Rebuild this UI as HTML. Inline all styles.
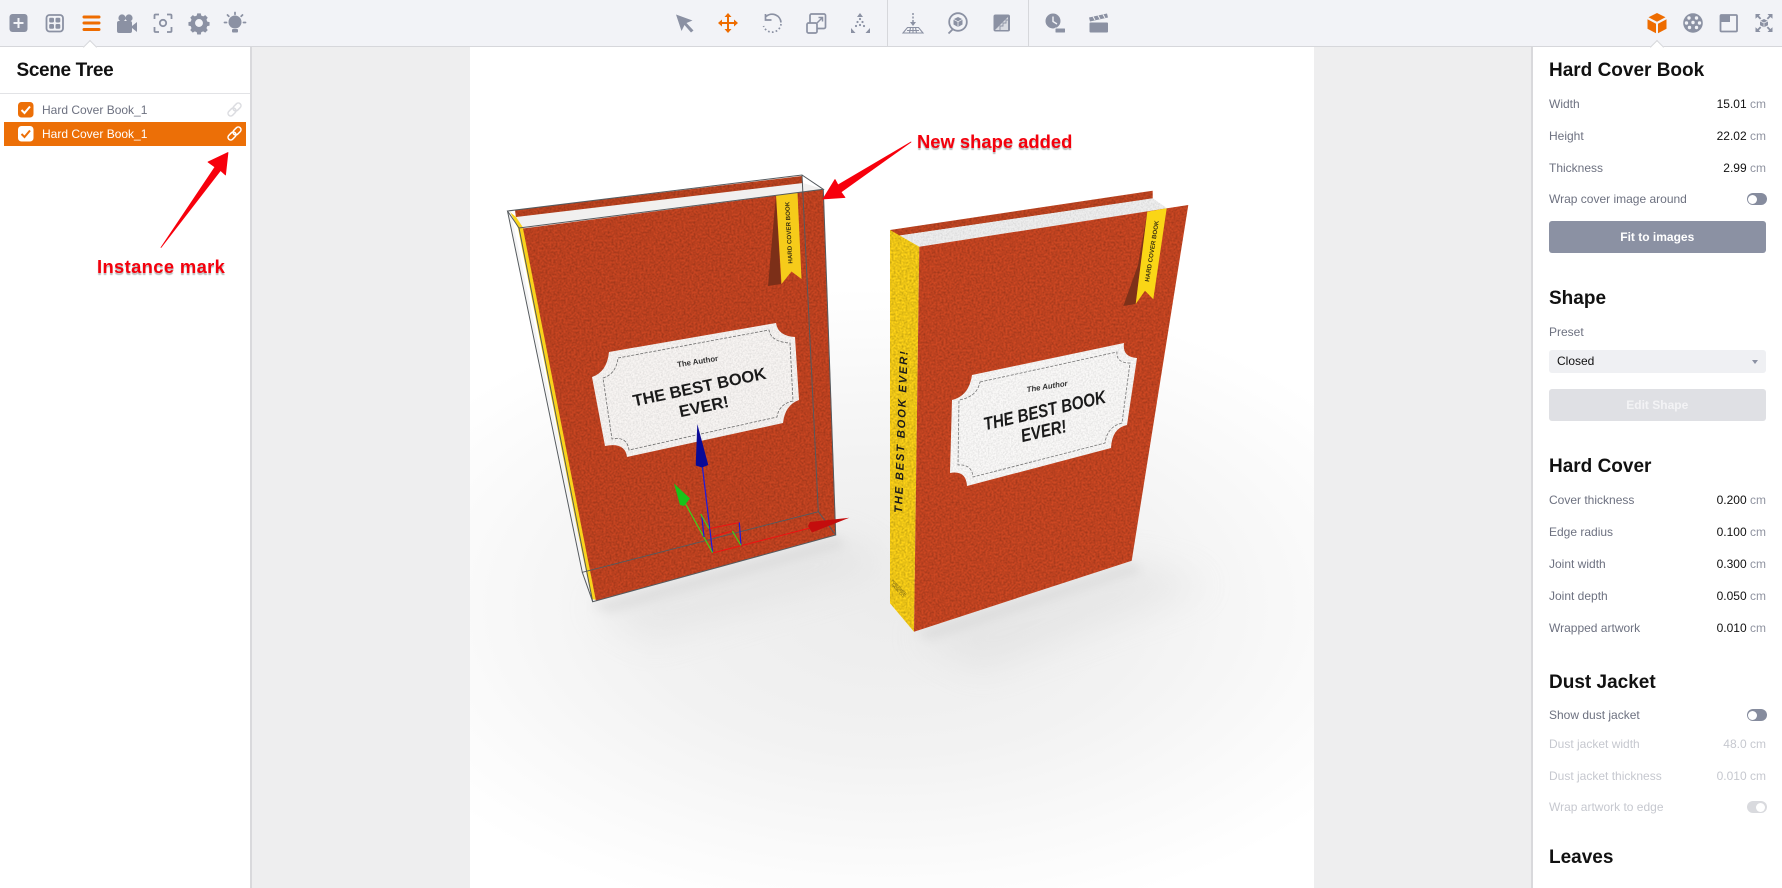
<!DOCTYPE html>
<html lang="en"><head><meta charset="utf-8"><title>Hard Cover Book</title>
<style>
*{box-sizing:border-box}
html,body{margin:0;padding:0;width:1782px;height:888px;overflow:hidden;background:#eeeeef;font-family:"Liberation Sans",sans-serif}
#root{position:relative;width:1782px;height:888px;overflow:hidden;background:#eeeeef}
.abs,.l,.v,.h{position:absolute}
svg{position:absolute;left:0;top:0}
#bar{position:absolute;left:0;top:0;width:1782px;height:47px;background:#f2f3f7;border-bottom:1px solid #d6d7db}
#lp{position:absolute;left:0;top:47px;width:252px;height:841px;background:#fff;border-right:2px solid #d9d9dc}
#rp{position:absolute;left:1530.5px;top:47px;width:251.5px;height:841px;background:#fff;border-left:2px solid #d9d9dc}
#vp{position:absolute;left:470px;top:47px;width:844px;height:841px;background:radial-gradient(ellipse 560px 320px at 420px 560px,#ececec 0,#f2f2f2 45%,#fafafa 78%,#fff 100%)}
.notch{position:absolute;width:10px;height:10px;background:#fff;border-left:1px solid #d6d7db;border-top:1px solid #d6d7db;transform:rotate(45deg);top:42px}
.h{font-weight:bold;font-size:19px;color:#111;line-height:22px;left:1549px}
.l{left:1549px;font-size:12px;line-height:16px;color:#6d7180;white-space:nowrap}
.v{right:16px;font-size:12px;line-height:16px;color:#111;white-space:nowrap}
.v i{font-style:normal;color:#8f93a0}
.dis,.dis i{color:#c6c8cf}
.tg{position:absolute;left:1746.5px;width:20px;height:12px;border-radius:6px;background:#868c9e}
.tg:before{content:"";position:absolute;left:1.5px;top:1.5px;width:9px;height:9px;border-radius:50%;background:#fff}
.tg.off{background:#d9dade}
.tg.off:before{left:9.5px}
.btn{position:absolute;left:1548.5px;width:217.5px;height:32px;border-radius:3px;color:#fff;font-weight:bold;font-size:12px;line-height:32px;text-align:center}
.row{position:absolute;font-size:12px;line-height:16px;left:42px;white-space:nowrap}
.ann{position:absolute;color:#f4000c;font-weight:bold;font-size:18.4px;line-height:20px;text-shadow:0 2px 1px rgba(0,0,0,.28);white-space:nowrap}
</style></head><body>
<div id="root">
<div id="vp"></div>

<svg width="1782" height="888" viewBox="0 0 1782 888">
<defs>
<filter id="nz" x="0" y="0" width="100%" height="100%" color-interpolation-filters="sRGB">
<feTurbulence type="fractalNoise" baseFrequency=".5" numOctaves="2" seed="4" result="t"/>
<feColorMatrix in="t" type="matrix" values="0 0 0 0 0  0 0 0 0 0  0 0 0 0 0  .42 0 0 0 -.13" result="a"/>
<feComposite in="a" in2="SourceAlpha" operator="in" result="b"/>
<feMerge><feMergeNode in="SourceGraphic"/><feMergeNode in="b"/></feMerge>
</filter>
<filter id="nl" x="0" y="0" width="100%" height="100%" color-interpolation-filters="sRGB">
<feTurbulence type="fractalNoise" baseFrequency=".6" numOctaves="2" seed="9" result="t"/>
<feColorMatrix in="t" type="matrix" values="0 0 0 0 .5  0 0 0 0 .5  0 0 0 0 .5  .4 0 0 0 -.14" result="a"/>
<feComposite in="a" in2="SourceAlpha" operator="in" result="b"/>
<feMerge><feMergeNode in="SourceGraphic"/><feMergeNode in="b"/></feMerge>
</filter>
<filter id="bl" x="-60%" y="-60%" width="220%" height="220%"><feGaussianBlur stdDeviation="18"/></filter>
<filter id="bl2" x="-30%" y="-100%" width="160%" height="300%"><feGaussianBlur stdDeviation="5"/></filter>
<clipPath id="vc"><rect x="470" y="47" width="844" height="841"/></clipPath>
</defs>

<!-- floor shadows -->
<g clip-path="url(#vc)">
<polygon points="592,605 840,535 890,565 650,640" fill="#cfcfcf" opacity=".3" filter="url(#bl)"/>
<polygon points="914,635 1135,562 1210,585 980,670" fill="#cfcfcf" opacity=".3" filter="url(#bl)"/>
<polygon points="590,605 838,537 846,546 610,613" fill="#c4c4c4" opacity=".32" filter="url(#bl2)"/>
<polygon points="914,633 1133,562 1142,571 930,640" fill="#c4c4c4" opacity=".32" filter="url(#bl2)"/>
</g>

<!-- BOOK 1 -->
<polygon points="515,210 802,176 803,184 516,218" fill="#c24520" filter="url(#nz)"/>
<polygon points="516,217 803,183 823,189 519,229" fill="#f1f0ef"/>
<polygon points="510,212 516,217 524,229 597,600 591,599 518,228" fill="#f9d41c"/>
<polygon points="508,212 511,213 592,600 590,600" fill="#f4f4f4"/>
<polygon points="523,228.500 823.500,189.500 836,535 596,601" fill="#ca4622" filter="url(#nz)"/>
<polygon points="776,195 781,284 768,286 772,240" fill="#7c2f18"/>
<polygon points="776,195 797.500,192.500 801.500,279 791.500,271.500 781.500,284" fill="#f6cb1a"/>
<text transform="translate(792.500,263.500) rotate(-93)" font-size="6.200" font-weight="bold" font-family="Liberation Sans" fill="#3c3210">HARD COVER BOOK</text>
<path d="M609,352 L776,323 Q778,336 795,337 L799,400 Q785,405 783,423 L627,457 Q625,442 605,446 L592,377 Q607,372 609,352 Z" fill="#f8f5f3" filter="url(#nl)"/>
<path d="M618,358 L769,330 Q771,342 790,343 L793,401 Q779,404 777,417 L629,450 Q627,436 612,439 L603,378 Q616,374 618,358Z" fill="none" stroke="#6c6c6c" stroke-width=".8" stroke-dasharray="3 1.500"/>
<g font-family="Liberation Sans" font-weight="bold" fill="#1a1a1a" text-anchor="middle">
<text transform="translate(698,364) rotate(-9)" font-size="7.800" fill="#333">The Author</text>
<text transform="translate(700.500,392.500) rotate(-11.900)" font-size="16.500">THE BEST BOOK</text>
<text transform="translate(705,412) rotate(-11.900)" font-size="16.500">EVER!</text>
</g>
<!-- wireframe -->
<g fill="none" stroke="#555a5e" stroke-width="1">
<path d="M507.500,211 L802,175 L823.300,189.300 L519,228 Z"/>
<path d="M519,228 L592.700,601.700 L835.700,535 L823.300,189.300"/>
<path d="M507.500,211 L582.300,572.300 L818.300,511.700 L802,175"/>
<path d="M582.300,572.300 L592.700,601.700 M818.300,511.700 L835.700,535"/>
</g>
<!-- gizmo -->
<g fill="none" stroke-width="1">
<path d="M712.700,553 L702.300,466" stroke="#1b1be0" stroke-width="1.200"/>
<path d="M712.700,553 L685,503" stroke="#3ad41a" stroke-width="1.200"/>
<path d="M712.700,553 L810,528" stroke="#ef1111"/>
<path d="M710,528.500 L739.300,522.500 M712,537 L732,531" stroke="#ef1111"/>
<path d="M739.300,522.500 L741,545.500 M701.700,515 L704,537" stroke="#1b1be0" stroke-width="1.200"/>
<path d="M700.700,514 L709,528.500 M732.300,531 L741,545.500" stroke="#3ad41a" stroke-width="1.200"/>
</g>
<polygon points="697.300,424 708.300,465 702,467.500 695.700,465.500" fill="#0a0a96"/>
<polygon points="674,483.500 690,498.500 684,506 680,505" fill="#17c41a"/>
<polygon points="849.300,517.700 812,532.500 808,526 810,522" fill="#c40d0d"/>

<!-- BOOK 2 -->
<polygon points="890,230 1152.700,190.700 1152.700,198.500 896,236" fill="#c64722" filter="url(#nz)"/>
<polygon points="897,236 1152.700,198.300 1167,208.300 919.300,246.700" fill="#efefef" filter="url(#nl)"/>
<polygon points="890,230 919.300,246.700 914,631.700 890,603.300" fill="#ffd418" filter="url(#nz)"/>
<polygon points="919.300,246.700 1188.300,205 1131.700,560.700 914,631.700" fill="#ce4823" filter="url(#nz)"/>
<polygon points="1147.300,211.700 1135.700,304 1123.300,306 1138,265" fill="#7e3119"/>
<polygon points="1147.300,211.700 1166.700,208.300 1153.300,299.300 1145,290.700 1135.700,304" fill="#fad616"/>
<text transform="translate(1149,282) rotate(-80.800)" font-size="6.200" font-weight="bold" font-family="Liberation Sans" fill="#3c3210">HARD COVER BOOK</text>
<path d="M972,375 L1124,343 Q1122,357 1137,358 L1127,425 Q1112,428 1111,448 L967,486 Q966,470 950,473 L952,400 Q969,396 972,375Z" fill="#faf9f8" filter="url(#nl)"/>
<path d="M980,382 L1117,352 Q1116,363 1130,363 L1122,423 Q1107,427 1105,443 L973,477 Q972,464 958,465 L959,400 Q977,397 980,382Z" fill="none" stroke="#777" stroke-width=".8" stroke-dasharray="3 1.500"/>
<g font-family="Liberation Sans" font-weight="bold" fill="#1a1a1a" text-anchor="middle" font-style="italic">
<text transform="translate(1047.500,389) rotate(-9)" font-size="7.800" fill="#333">The Author</text>
<text transform="translate(1046,416.500) rotate(-12.900) scale(1,1.2)" font-size="15.200">THE BEST BOOK</text>
<text transform="translate(1045,437) rotate(-12.900) scale(1,1.2)" font-size="15.200">EVER!</text>
<text transform="translate(902,513) rotate(-88)" font-size="11.200" letter-spacing="1.800" text-anchor="start">THE BEST BOOK EVER!</text>
</g>
<g fill="#6a5a18" font-family="Liberation Sans" font-size="3.600">
<text transform="translate(891,581) rotate(46)">PUBLISHER</text>
<text transform="translate(891,585) rotate(46)">NAME CO.</text>
</g>
</svg>

<div id="bar"></div>
<div style="position:absolute;left:887px;top:0;width:1px;height:46px;background:#d6d7db"></div>
<div style="position:absolute;left:1028px;top:0;width:1px;height:46px;background:#d6d7db"></div>

<div id="lp"></div>
<div id="rp"></div>
<div class="notch" style="left:85px"></div>
<div class="notch" style="left:1652px"></div>

<!-- left panel -->
<div class="abs" style="left:16.500px;top:60px;font-size:19px;font-weight:bold;color:#111;line-height:22px;letter-spacing:-.35px">Scene Tree</div>
<div class="abs" style="left:0;top:93px;width:250px;height:1px;background:#e2e3e6"></div>
<div class="abs" style="left:4px;top:122px;width:242px;height:24px;background:#ec6f07"></div>
<div class="row" style="top:102px;color:#6d7180">Hard Cover Book_1</div>
<div class="row" style="top:126px;color:#fff">Hard Cover Book_1</div>

<!-- right panel -->
<div class="h" style="top:60px">Hard Cover Book</div>
<div class="l" style="top:96px">Width</div><div class="v" style="top:96px">15.01 <i>cm</i></div>
<div class="l" style="top:128px">Height</div><div class="v" style="top:128px">22.02 <i>cm</i></div>
<div class="l" style="top:160px">Thickness</div><div class="v" style="top:160px">2.99 <i>cm</i></div>
<div class="l" style="top:191px">Wrap cover image around</div><div class="tg" style="top:193px"></div>
<div class="btn" style="top:221px;background:#8b91a3">Fit to images</div>

<div class="h" style="top:288px">Shape</div>
<div class="l" style="top:324px">Preset</div>
<div class="abs" style="left:1548.500px;top:350px;width:217.500px;height:23px;border-radius:3px;background:#eff0f3;font-size:12px;line-height:23px;color:#111;padding-left:8.500px">Closed</div>
<div class="abs" style="left:1752px;top:360px;width:0;height:0;border-left:3px solid transparent;border-right:3px solid transparent;border-top:4px solid #8b91a3"></div>
<div class="btn" style="top:389px;background:#dfe0e4;color:#f3f3f5">Edit Shape</div>

<div class="h" style="top:456px">Hard Cover</div>
<div class="l" style="top:492px">Cover thickness</div><div class="v" style="top:492px">0.200 <i>cm</i></div>
<div class="l" style="top:524px">Edge radius</div><div class="v" style="top:524px">0.100 <i>cm</i></div>
<div class="l" style="top:556px">Joint width</div><div class="v" style="top:556px">0.300 <i>cm</i></div>
<div class="l" style="top:588px">Joint depth</div><div class="v" style="top:588px">0.050 <i>cm</i></div>
<div class="l" style="top:620px">Wrapped artwork</div><div class="v" style="top:620px">0.010 <i>cm</i></div>

<div class="h" style="top:672px">Dust Jacket</div>
<div class="l" style="top:707px">Show dust jacket</div><div class="tg" style="top:709px"></div>
<div class="l dis" style="top:736px">Dust jacket width</div><div class="v dis" style="top:736px">48.0 <i>cm</i></div>
<div class="l dis" style="top:768px">Dust jacket thickness</div><div class="v dis" style="top:768px">0.010 <i>cm</i></div>
<div class="l dis" style="top:799px">Wrap artwork to edge</div>
<div class="tg off" style="top:801px"></div>
<div class="h" style="top:847px">Leaves</div>
<div class="l dis" style="top:885px">Signature count</div><div class="v dis" style="top:885px">0.010 <i>cm</i></div>

<div class="ann" style="left:97px;top:257px;letter-spacing:.35px">Instance mark</div>
<div class="ann" style="left:917px;top:132px">New shape added</div>

<!-- icons + arrows overlay -->
<svg width="1782" height="888" viewBox="0 0 1782 888" fill="none">
<g fill="#8b91a3" stroke="none">
<!-- plus square -->
<rect x="9.500" y="14" width="18" height="18" rx="3"/>
<path d="M17.500 18h2v4h4v2h-4v4h-2v-4h-4v-2h4z" fill="#f2f3f7"/>
<!-- camera -->
<circle cx="122" cy="18" r="3.600"/><circle cx="129" cy="18" r="3.600"/>
<path d="M117 23a2 2 0 0 1 2-2h11a2 2 0 0 1 2 2v8a2 2 0 0 1-2 2h-11a2 2 0 0 1-2-2z"/>
<path d="M132 26l5-4v10l-5-4z"/>
<!-- gear -->
<g transform="translate(199 23) scale(.88) translate(-199 -23)"><path fill-rule="evenodd" d="M197 12h4l.6 2.600 2.200.9 2.300-1.400 2.800 2.800-1.400 2.300.9 2.200 2.600.6v4l-2.600.6-.9 2.200 1.400 2.300-2.800 2.800-2.300-1.400-2.200.9-.6 2.600h-4l-.6-2.600-2.200-.9-2.300 1.400-2.800-2.800 1.400-2.300-.9-2.200-2.600-.6v-4l2.600-.6.9-2.200-1.400-2.300 2.800-2.800 2.300 1.400 2.200-.9zM199 18.500a4.500 4.500 0 1 0 0 9 4.500 4.500 0 0 0 0-9z"/></g>
<!-- sun -->
<circle cx="235" cy="22" r="6.500"/>
<rect x="232" y="29" width="6" height="3.500" rx="1"/>
</g>
<g stroke="#8b91a3" stroke-width="1.800">
<!-- grid -->
<rect x="46.500" y="15" width="16.500" height="16.500" rx="3"/>
<g fill="#8b91a3" stroke="none"><rect x="49.200" y="17.700" width="4.800" height="4.800" rx="1.200"/><rect x="55.500" y="17.700" width="4.800" height="4.800" rx="1.200"/><rect x="49.200" y="24" width="4.800" height="4.800" rx="1.200"/><rect x="55.500" y="24" width="4.800" height="4.800" rx="1.200"/></g>
<!-- focus -->
<path d="M154.500 19v-3.500a1 1 0 0 1 1-1H159M167 14.500h3.500a1 1 0 0 1 1 1V19M171.500 27v4a1 1 0 0 1-1 1H167M159 32h-3.500a1 1 0 0 1-1-1v-4"/>
<circle cx="163" cy="23" r="3.200"/>
<!-- sun rays -->
<path d="M235 12.500v1.800M224.500 22.500h2M243.500 22.500h2M227.500 15l1.300 1.300M242.500 15l-1.300 1.300" stroke-linecap="round"/>
</g>
<!-- hamburger -->
<path d="M84 17h15M84 23h15M84 29.500h15" stroke="#ee6c00" stroke-width="3" stroke-linecap="round"/>

<!-- cursor -->
<path d="M676 14.500l16.500 6-6 2.500 7 7.500-2.500 2-6.500-7.500-3 6z" fill="#8b91a3"/>
<!-- move -->
<g fill="#ee6c00"><path d="M728 13l3.500 4h-7zM728 33l3.500-4h-7zM718 23l4-3.500v7zM738 23l-4-3.500v7z"/></g>
<path d="M728 16v14M721 23h14" stroke="#ee6c00" stroke-width="2"/>
<!-- rotate -->
<path d="M766 16.500a9 9 0 0 1 15 6" stroke="#8b91a3" stroke-width="1.700"/>
<path d="M781 24a9 9 0 0 1-17.500 2" stroke="#8b91a3" stroke-width="1.700" stroke-dasharray="1.700 2.200"/>
<path d="M765.500 14v6h6" stroke="#8b91a3" stroke-width="1.700"/>
<!-- scale -->
<rect x="810" y="14" width="15.500" height="14.500" rx="1.500" stroke="#8b91a3" stroke-width="1.700"/>
<rect x="807" y="23" width="10" height="10" rx="1.500" fill="#f2f3f7" stroke="#8b91a3" stroke-width="1.700"/>
<path d="M817 23l5-5M818.500 17.500h4v4" stroke="#8b91a3" stroke-width="1.500"/>
<!-- explode -->
<g fill="#8b91a3"><path d="M860 13l3 4h-6z"/><circle cx="860" cy="19" r="1.100"/><circle cx="857.500" cy="22" r="1.100"/><circle cx="862.500" cy="22" r="1.100"/><circle cx="860" cy="25" r="1.100"/><circle cx="856" cy="26" r="1.100"/><circle cx="864" cy="26" r="1.100"/>
<path d="M851 33v-5l4.500 5zM870 33v-5l-4.500 5z"/></g>
<!-- floor -->
<path d="M913 13v10" stroke="#8b91a3" stroke-width="1.500" stroke-dasharray="2 1.500"/>
<path d="M910 22l3 4 3-4z" fill="#8b91a3"/>
<path d="M907.500 27.500h11l4.500 5.500h-20zM907 30.500h12M910.500 27.500l-1 5.500M915.500 27.500l1 5.500M913 27.500v5.500" stroke="#8b91a3" stroke-width="1.100"/>
<!-- material ball -->
<circle cx="958" cy="22" r="8.800" stroke="#8b91a3" stroke-width="1.800"/>
<path d="M953 29l-4.500 4.500" stroke="#8b91a3" stroke-width="1.800"/>
<path d="M958 17l4.500 2.300v5.200l-4.500 2.500-4.500-2.500v-5.200z" fill="#8b91a3"/>
<path d="M953.500 19.300l4.500 2.400 4.500-2.400M958 21.700v5" stroke="#f2f3f7" stroke-width=".8"/>
<!-- texture -->
<rect x="993.500" y="14.500" width="16.500" height="17" rx="2" fill="#8b91a3"/>
<path d="M995 30l13-13v13z" fill="#d9dbe2"/>
<path d="M1000 30v-4h3v-3h3v-3h3" stroke="#8b91a3" stroke-width=".9"/>
<!-- clock -->
<circle cx="1053" cy="21" r="7.500" fill="#8b91a3"/>
<path d="M1053 16.500v5l4 2.500" stroke="#f2f3f7" stroke-width="1.400"/>
<rect x="1055" y="28" width="10.500" height="5" rx="1" fill="#8b91a3" stroke="#f2f3f7" stroke-width="1"/>
<!-- clapper -->
<rect x="1089.500" y="22.500" width="18.500" height="10" rx="1" fill="#8b91a3"/>
<path d="M1089 17.500l18-4 1 4-18 4z" fill="#8b91a3"/>
<path d="M1093 16.500l2 3.500M1098 15.500l2 3.500M1103 14.500l2 3.500" stroke="#f2f3f7" stroke-width="1"/>
<!-- cube -->
<path d="M1657 13l8.500 4.300-8.500 4.500-8.500-4.500z" fill="#ee6c00"/>
<path d="M1647.500 19.300l8.500 4.500v9.500l-8.500-4.600zM1666.500 19.300l-8.500 4.500v9.500l8.500-4.600z" fill="#ee6c00"/>
<!-- checker ball -->
<circle cx="1693" cy="23" r="9.800" fill="#8b91a3"/>
<g fill="#f2f3f7"><circle cx="1689" cy="18" r="1.700"/><circle cx="1696.500" cy="18" r="1.700"/><circle cx="1693" cy="22.500" r="1.700"/><circle cx="1686.500" cy="23" r="1.700"/><circle cx="1699.500" cy="23" r="1.700"/><circle cx="1689.500" cy="27.500" r="1.700"/><circle cx="1696.500" cy="27.500" r="1.700"/></g>
<!-- half square -->
<rect x="1720.500" y="15" width="16.500" height="16.500" rx="1" stroke="#8b91a3" stroke-width="1.800"/>
<path d="M1721 15.500h9v6.500h-9z" fill="#8b91a3"/>
<!-- expand -->
<g fill="#8b91a3"><path d="M1755.500 14h5l-1.700 1.700 2.500 2.500-1.300 1.300-2.500-2.500-2 1.800zM1772.500 14h-5l1.700 1.700-2.500 2.500 1.300 1.300 2.500-2.500 2 1.800zM1755.500 32h5l-1.700-1.700 2.500-2.500-1.300-1.300-2.500 2.500-2-1.800zM1772.500 32h-5l1.700-1.700-2.500-2.500 1.300-1.300 2.500 2.500 2-1.800z"/>
<path d="M1764 19l4 2v4.200l-4 2-4-2V21z"/></g>
<path d="M1760 21l4 2 4-2M1764 23v4" stroke="#f2f3f7" stroke-width=".7"/>

<!-- tree checkboxes -->
<rect x="18" y="102" width="15.500" height="15.500" rx="3.500" fill="#ec6f07"/>
<path d="M21.500 110l3 3 5.500-6.500" stroke="#fff" stroke-width="2"/>
<rect x="18" y="126" width="15.500" height="15.500" rx="3.500" fill="#fff"/>
<path d="M21.500 134l3 3 5.500-6.500" stroke="#ec6f07" stroke-width="2"/>
<!-- link icons -->
<g stroke-width="1.500">
<g stroke="#dcdde1"><rect x="227.500" y="109.300" width="9" height="5.400" rx="2.700" transform="rotate(-45 232 112)"/><rect x="232.500" y="104.300" width="9" height="5.400" rx="2.700" transform="rotate(-45 237 107)"/></g>
<g stroke="#fff"><rect x="227.500" y="133.300" width="9" height="5.400" rx="2.700" transform="rotate(-45 232 136)"/><rect x="232.500" y="128.300" width="9" height="5.400" rx="2.700" transform="rotate(-45 237 131)"/></g>
</g>

<!-- red arrows -->
<path d="M161 247.500L215 167L208 162L228 152.500L225.500 175L220.500 170.500Z" fill="#f7000c" stroke="#f7000c" stroke-width=".8" stroke-linejoin="round"/>
<path d="M911 142L838 185L835 179.500L823 199L845 197.500L841 192Z" fill="#f7000c" stroke="#f7000c" stroke-width=".8" stroke-linejoin="round"/>
</svg>
</div>
</body></html>
